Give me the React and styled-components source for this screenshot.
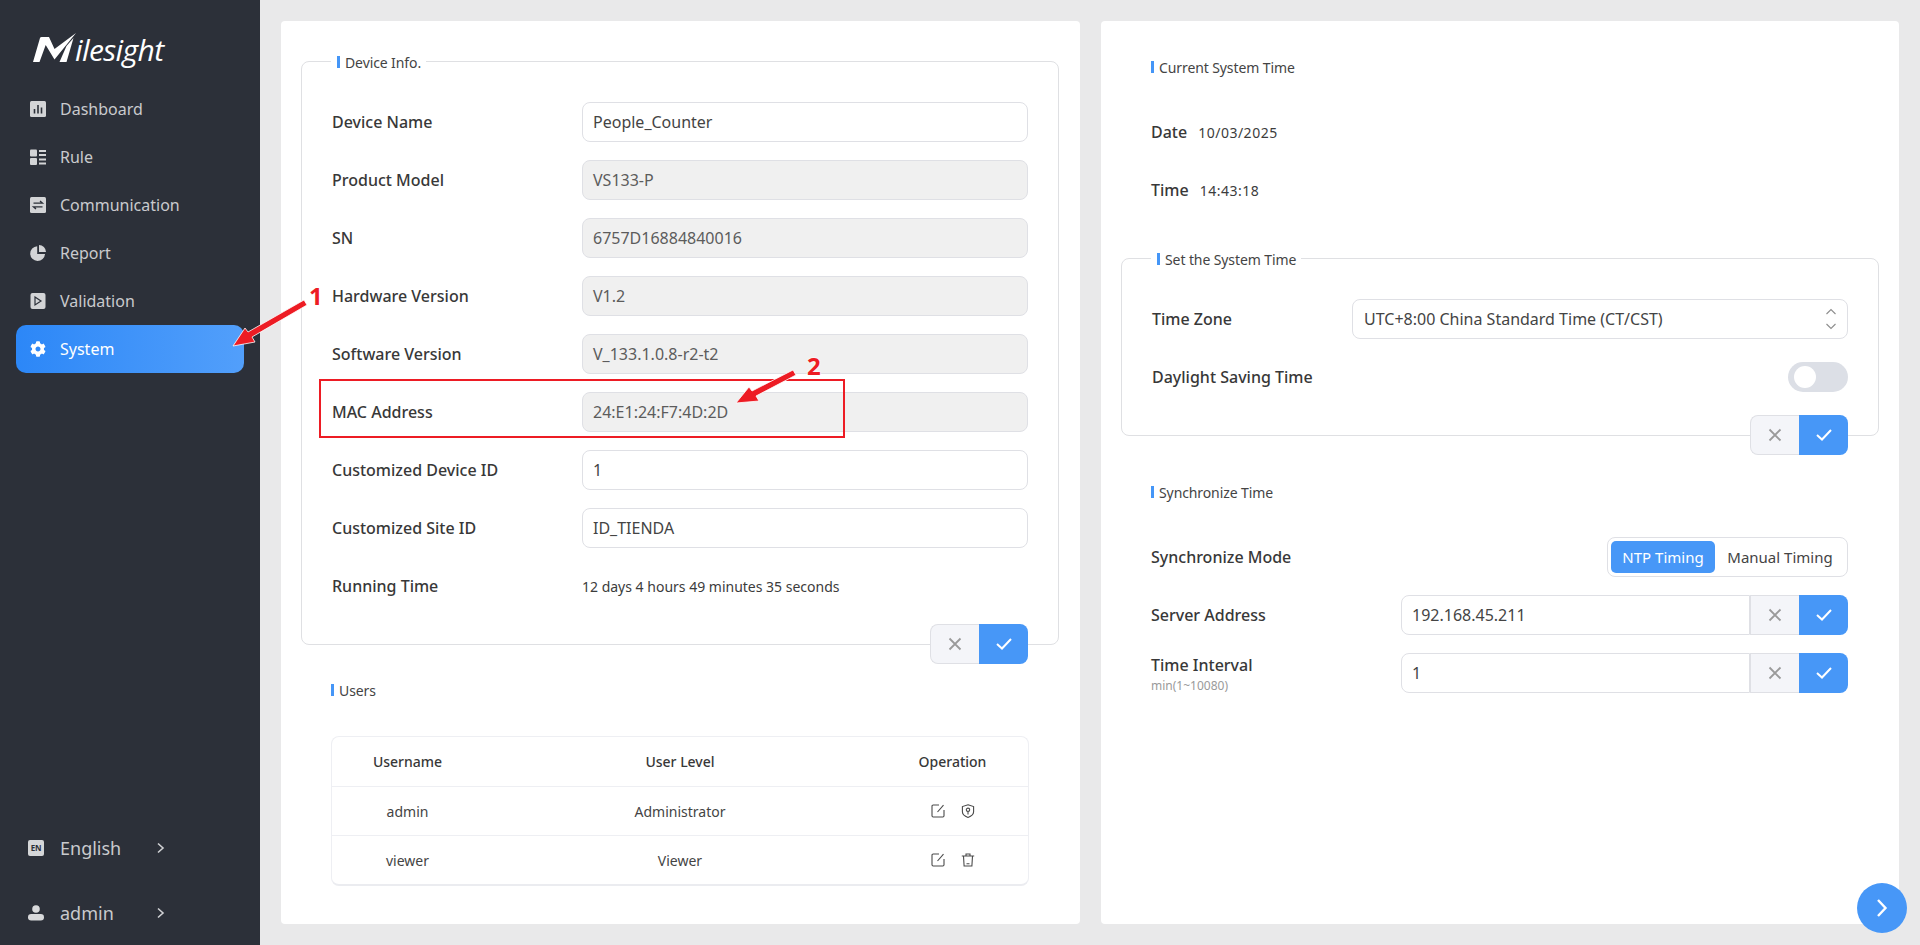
import React from "react";
import styled, { createGlobalStyle } from "styled-components";
import { FaCog } from "react-icons/fa";

const GlobalStyle = createGlobalStyle`
  html, body { margin: 0; padding: 0; background: #e9e9ea; }
  * { box-sizing: border-box; }
  body { font-family: "Noto Sans", "Liberation Sans", sans-serif; color: #333; }
`;

const Page = styled.div`
  position: relative;
  display: flex;
  width: 1920px;
  height: 945px;
  overflow: hidden;
  background: #e9e9ea;
`;

const Sidebar = styled.aside`
  display: flex;
  flex-direction: column;
  flex: 0 0 260px;
  background: #2c3039;
  color: #cfd0d3;
`;

const LogoBox = styled.div`
  display: flex;
  align-items: flex-end;
  height: 85px;
  padding: 32px 0 0 33px;
`;

const LogoText = styled.span`
  margin: 0 0 17px -4px;
  font-family: "Open Sans", sans-serif;
  font-size: 30px;
  line-height: 36px;
  font-style: italic;
  font-weight: 400;
  letter-spacing: -0.6px;
  color: #fff;
`;

const LogoMark = styled.svg`
  flex: none;
  margin-bottom: 21px;
`;

const Menu = styled.nav`
  display: flex;
  flex-direction: column;
  flex: 1;
  padding: 0 16px;
`;

const MenuItem = styled.div`
  display: flex;
  align-items: center;
  gap: 14px;
  height: 48px;
  padding-left: 14px;
  border-radius: 10px;
  font-size: 16px;
  color: ${({ $active }) => ($active ? "#fff" : "#c9cacd")};
  background: ${({ $active }) =>
    $active ? "linear-gradient(90deg, #2c87f7, #529ffb)" : "transparent"};
`;

const MenuIcon = styled.span`
  display: flex;
  align-items: center;
  justify-content: center;
  width: 16px;
  height: 16px;
`;

const Footer = styled.div`
  display: flex;
  flex-direction: column;
  padding-left: 28px;
`;

const FooterItem = styled.div`
  display: flex;
  align-items: center;
  height: 65px;
  font-size: 18px;
  color: #c9cacd;
`;

const FooterLabel = styled.span`
  width: 96px;
  margin-left: 16px;
`;

const LangBadge = styled.span`
  display: flex;
  align-items: center;
  justify-content: center;
  width: 16px;
  height: 16px;
  border-radius: 2px;
  background: #d5d6d8;
  color: #2c3039;
  font-size: 8px;
  font-weight: 700;
  letter-spacing: -0.2px;
`;

const Main = styled.main`
  display: flex;
  flex: 1;
  gap: 21px;
  padding: 21px;
`;

const LeftCard = styled.section`
  flex: 0 0 799px;
  padding: 40px 21px 0 20px;
  background: #fff;
  border-radius: 4px;
`;

const RightCard = styled.section`
  flex: 0 0 798px;
  padding: 36px 20px 0 20px;
  background: #fff;
  border-radius: 4px;
`;

const Fieldset = styled.div`
  position: relative;
  margin-top: ${({ $margin }) => $margin || 0}px;
  padding: 40px 30px 0 30px;
  border: 1px solid #dfe0e3;
  border-radius: 8px;
`;

const Legend = styled.div`
  position: absolute;
  top: -10px;
  left: 29px;
  padding: 0 5px 0 6px;
  background: #fff;
`;

const Heading = styled.div`
  display: flex;
  align-items: center;
  height: 20px;
  font-size: 14px;
  letter-spacing: -0.1px;
  color: #444;
  &::before {
    content: "";
    width: 3px;
    height: 12px;
    margin-right: 5px;
    background: #4596f7;
  }
`;

const Section = styled.div`
  margin: ${({ $top }) => $top}px ${({ $right }) => $right}px 0 30px;
`;

const Rows = styled.div`
  display: flex;
  flex-direction: column;
  gap: 18px;
  margin-top: ${({ $top }) => $top || 0}px;
`;

const Row = styled.div`
  display: flex;
  align-items: center;
  height: 40px;
`;

const Label = styled.div`
  flex: 0 0 ${({ $width }) => $width}px;
  font-size: 16px;
  font-weight: 500;
  color: #383838;
`;

const SubLabel = styled.div`
  margin-top: 3px;
  font-size: 12px;
  font-weight: 400;
  line-height: 14px;
  color: #9a9a9a;
`;

const Field = styled.div`
  display: flex;
  align-items: center;
  flex: 1;
  height: 40px;
  padding-left: 10px;
  border: 1px solid #dfe0e5;
  border-radius: ${({ $joined }) => ($joined ? "8px 0 0 8px" : "8px")};
  background: ${({ $disabled }) => ($disabled ? "#f0f0f0" : "#fff")};
  font-size: 16px;
  color: ${({ $disabled }) => ($disabled ? "#5c5c5c" : "#444")};
`;

const SelectField = styled(Field)`
  justify-content: space-between;
  padding: 0 10px 0 11px;
`;

const PlainValue = styled.div`
  font-size: 14px;
  color: #3c3c3c;
`;

const DateValue = styled(PlainValue)`
  margin-left: 11px;
  letter-spacing: 0.5px;
`;

const DateLabel = styled(Label)`
  flex: 0 0 auto;
`;

const ButtonRow = styled.div`
  display: flex;
  justify-content: flex-end;
  margin: 18px 0 -20px 0;
`;

const ButtonGroup = styled.div`
  display: flex;
  flex: 0 0 98px;
  height: 40px;
`;

const CancelButton = styled.div`
  display: flex;
  align-items: center;
  justify-content: center;
  width: 49px;
  background: #f4f5f9;
  border: 1px solid #dfe0e5;
  border-right: none;
  border-radius: ${({ $joined }) => ($joined ? "0" : "8px 0 0 8px")};
`;

const ConfirmButton = styled.div`
  display: flex;
  align-items: center;
  justify-content: center;
  width: 49px;
  background: #4797f7;
  border-radius: 0 8px 8px 0;
`;

const Toggle = styled.div`
  display: flex;
  align-items: center;
  width: 60px;
  height: 30px;
  margin-left: auto;
  padding-left: 6px;
  border-radius: 15px;
  background: #dcdfe6;
  &::before {
    content: "";
    width: 22px;
    height: 22px;
    border-radius: 50%;
    background: #fff;
  }
`;

const Segmented = styled.div`
  display: flex;
  align-items: center;
  width: 241px;
  height: 40px;
  margin-left: auto;
  padding: 0 3px;
  border: 1px solid #dfe0e5;
  border-radius: 8px;
`;

const Segment = styled.div`
  display: flex;
  align-items: center;
  justify-content: center;
  flex: 0 0 ${({ $width }) => $width}px;
  height: 32px;
  border-radius: 5px;
  font-size: 15px;
  color: ${({ $active }) => ($active ? "#fff" : "#444")};
  background: ${({ $active }) => ($active ? "#4797f7" : "transparent")};
`;

const UserTable = styled.div`
  margin-top: 36px;
  border: 1px solid #eeeff3;
  border-bottom: 2px solid #ebecf0;
  border-radius: 8px;
`;

const TableRow = styled.div`
  display: grid;
  grid-template-columns: 151px 394px 1fr;
  align-items: center;
  height: ${({ $height }) => $height}px;
  border-bottom: ${({ $last }) => ($last ? "none" : "1px solid #eeeff3")};
  text-align: center;
  font-size: 14px;
  font-weight: ${({ $head }) => ($head ? 500 : 400)};
  color: ${({ $head }) => ($head ? "#383838" : "#444")};
`;

const Operation = styled.div`
  display: flex;
  justify-content: center;
  gap: 16px;
  height: 14px;
`;

const FloatButton = styled.div`
  position: absolute;
  left: 1857px;
  top: 883px;
  display: flex;
  align-items: center;
  justify-content: center;
  width: 50px;
  height: 50px;
  border-radius: 50%;
  background: #4797f7;
`;

const AnnotationLayer = styled.svg`
  position: absolute;
  left: 0;
  top: 0;
  width: 1920px;
  height: 945px;
  pointer-events: none;
`;

const MacBox = styled.div`
  position: absolute;
  left: 319px;
  top: 379px;
  width: 526px;
  height: 59px;
  border: 2px solid #ed1c24;
  pointer-events: none;
`;

const Callout = styled.span`
  position: absolute;
  left: ${({ $x }) => $x}px;
  top: ${({ $y }) => $y}px;
  font-size: 24px;
  line-height: 24px;
  font-weight: 700;
  color: #ed1c24;
  text-shadow: 0 0 2px #fff, 0 0 2px #fff;
`;

const Logo = () => (
  <LogoMark width="46" height="32" viewBox="-1 0 46 32">
    <path
      fill="#fff"
      d="M-1 30 L6 6 Q6.4 5 7.6 5 L15 5 L20.5 17 L42 1 L20.5 27.5 L11.7 13 L5.5 30 Z"
    />
    <path fill="#fff" d="M25.5 30 L32.5 14 L39.5 6 L32.5 30 Z" />
  </LogoMark>
);

const DashboardIcon = () => (
  <svg width="16" height="16" viewBox="0 0 16 16">
    <rect width="16" height="16" rx="1.5" fill="#d3d4d6" />
    <path d="M4.5 8v4.5M8 4v8.5M11.5 6.5v6" stroke="#2c3039" strokeWidth="1.6" />
  </svg>
);

const RuleIcon = () => (
  <svg width="16" height="16" viewBox="0 0 16 16" fill="#d3d4d6">
    <rect x="0" y="0.5" width="7" height="7" rx="1" />
    <rect x="0" y="9" width="7" height="7" rx="1" />
    <rect x="9" y="1" width="7" height="2" />
    <rect x="9" y="5" width="7" height="2" />
    <rect x="9" y="9.5" width="7" height="2" />
    <rect x="9" y="13.5" width="7" height="2" />
  </svg>
);

const CommunicationIcon = () => (
  <svg width="16" height="16" viewBox="0 0 16 16">
    <rect width="16" height="16" rx="1.5" fill="#d3d4d6" />
    <path d="M3.5 6.2h9L10 4M12.5 9.8h-9L6 12" fill="none" stroke="#2c3039" strokeWidth="1.3" />
  </svg>
);

const ReportIcon = () => (
  <svg width="16" height="16" viewBox="0 0 16 16" fill="#d3d4d6">
    <path d="M7.2 1.2A7.4 7.4 0 1 0 15 9H7.2Z" />
    <path d="M9 0a7.2 7.2 0 0 1 7 7H9Z" />
  </svg>
);

const ValidationIcon = () => (
  <svg width="16" height="16" viewBox="0 0 16 16">
    <rect x="0.5" width="15" height="16" rx="2" fill="#d3d4d6" />
    <path d="M5 4l6 4-6 4Z" fill="none" stroke="#2c3039" strokeWidth="1.2" />
  </svg>
);

const UserIcon = () => (
  <svg width="16" height="16" viewBox="0 0 16 16" fill="#d8d9db">
    <circle cx="8" cy="4" r="3.8" />
    <rect y="9" width="16" height="6.5" rx="3.2" />
  </svg>
);

const Chevron = () => (
  <svg width="10" height="12" viewBox="0 0 10 12" fill="none" stroke="#cfd0d3" strokeWidth="1.6">
    <path d="M2 1.5L7 6l-5 4.5" />
  </svg>
);

const CrossIcon = () => (
  <svg width="14" height="14" viewBox="0 0 14 14" fill="none" stroke="#9a9a9a" strokeWidth="1.8">
    <path d="M1.5 1.5l11 11M12.5 1.5l-11 11" />
  </svg>
);

const CheckIcon = () => (
  <svg width="16" height="14" viewBox="0 0 16 14" fill="none" stroke="#fff" strokeWidth="2">
    <path d="M1 7l5 4.5L15 2" />
  </svg>
);

const UpDownIcon = () => (
  <svg width="12" height="22" viewBox="0 0 12 22" fill="none" stroke="#8d8d8d" strokeWidth="1.1">
    <path d="M1.5 6L6 1.5 10.5 6M1.5 16L6 20.5 10.5 16" />
  </svg>
);

const EditIcon = () => (
  <svg width="14" height="14" viewBox="0 0 14 14" fill="none" stroke="#4a4a4a" strokeWidth="1.1">
    <path d="M8 1H2.2Q1 1 1 2.2v9.6Q1 13 2.2 13h9.6q1.2 0 1.2-1.2V6" />
    <path d="M6.5 8L12.5 1.2" />
  </svg>
);

const ShieldIcon = () => (
  <svg width="14" height="14" viewBox="0 0 14 14" fill="none" stroke="#4a4a4a" strokeWidth="1.1">
    <path d="M7 .8L12.6 2.6v5.2c0 2.8-2.6 4.6-5.6 5.6-3-1-5.6-2.8-5.6-5.6V2.6Z" />
    <circle cx="7" cy="5.8" r="1.7" />
    <path d="M7 7.5v3" />
  </svg>
);

const TrashIcon = () => (
  <svg width="14" height="14" viewBox="0 0 14 14" fill="none" stroke="#4a4a4a" strokeWidth="1.1">
    <path d="M.8 3h12.4M5 3V1h4v2M2.5 3l.6 10h7.8l.6-10M5.5 10.8h3" />
  </svg>
);

const ActionButtons = ({ joined }) => (
  <ButtonGroup>
    <CancelButton $joined={joined}>
      <CrossIcon />
    </CancelButton>
    <ConfirmButton>
      <CheckIcon />
    </ConfirmButton>
  </ButtonGroup>
);

const menu = [
  { label: "Dashboard", icon: <DashboardIcon /> },
  { label: "Rule", icon: <RuleIcon /> },
  { label: "Communication", icon: <CommunicationIcon /> },
  { label: "Report", icon: <ReportIcon /> },
  { label: "Validation", icon: <ValidationIcon /> },
  { label: "System", icon: <FaCog size={16} color="#fff" />, active: true },
];

const deviceRows = [
  { label: "Device Name", value: "People_Counter" },
  { label: "Product Model", value: "VS133-P", disabled: true },
  { label: "SN", value: "6757D16884840016", disabled: true },
  { label: "Hardware Version", value: "V1.2", disabled: true },
  { label: "Software Version", value: "V_133.1.0.8-r2-t2", disabled: true },
  { label: "MAC Address", value: "24:E1:24:F7:4D:2D", disabled: true },
  { label: "Customized Device ID", value: "1" },
  { label: "Customized Site ID", value: "ID_TIENDA" },
];

const App = () => {
  return (
    <Page>
      <GlobalStyle />
      <Sidebar>
        <LogoBox>
          <Logo />
          <LogoText>ilesight</LogoText>
        </LogoBox>
        <Menu>
          {menu.map((item) => (
            <MenuItem key={item.label} $active={item.active}>
              <MenuIcon>{item.icon}</MenuIcon>
              {item.label}
            </MenuItem>
          ))}
        </Menu>
        <Footer>
          <FooterItem>
            <LangBadge>EN</LangBadge>
            <FooterLabel>English</FooterLabel>
            <Chevron />
          </FooterItem>
          <FooterItem>
            <UserIcon />
            <FooterLabel>admin</FooterLabel>
            <Chevron />
          </FooterItem>
        </Footer>
      </Sidebar>

      <Main>
        <LeftCard>
          <Fieldset>
            <Legend>
              <Heading>Device Info.</Heading>
            </Legend>
            <Rows>
              {deviceRows.map((row) => (
                <Row key={row.label}>
                  <Label $width={250}>{row.label}</Label>
                  <Field $disabled={row.disabled}>{row.value}</Field>
                </Row>
              ))}
              <Row>
                <Label $width={250}>Running Time</Label>
                <PlainValue>12 days 4 hours 49 minutes 35 seconds</PlainValue>
              </Row>
            </Rows>
            <ButtonRow>
              <ActionButtons />
            </ButtonRow>
          </Fieldset>

          <Section $top={35} $right={30}>
            <Heading>Users</Heading>
            <UserTable>
              <TableRow $head $height={50}>
                <div>Username</div>
                <div>User Level</div>
                <div>Operation</div>
              </TableRow>
              <TableRow $height={49}>
                <div>admin</div>
                <div>Administrator</div>
                <Operation>
                  <EditIcon />
                  <ShieldIcon />
                </Operation>
              </TableRow>
              <TableRow $height={48} $last>
                <div>viewer</div>
                <div>Viewer</div>
                <Operation>
                  <EditIcon />
                  <TrashIcon />
                </Operation>
              </TableRow>
            </UserTable>
          </Section>
        </LeftCard>

        <RightCard>
          <Section $top={0} $right={31}>
            <Heading>Current System Time</Heading>
            <Rows $top={35}>
              <Row>
                <DateLabel>Date</DateLabel>
                <DateValue>10/03/2025</DateValue>
              </Row>
              <Row>
                <DateLabel>Time</DateLabel>
                <DateValue>14:43:18</DateValue>
              </Row>
            </Rows>
          </Section>

          <Fieldset $margin={48}>
            <Legend>
              <Heading>Set the System Time</Heading>
            </Legend>
            <Rows>
              <Row>
                <Label $width={200}>Time Zone</Label>
                <SelectField>
                  UTC+8:00 China Standard Time (CT/CST)
                  <UpDownIcon />
                </SelectField>
              </Row>
              <Row>
                <Label $width={200}>Daylight Saving Time</Label>
                <Toggle />
              </Row>
            </Rows>
            <ButtonRow>
              <ActionButtons />
            </ButtonRow>
          </Fieldset>

          <Section $top={46} $right={31}>
            <Heading>Synchronize Time</Heading>
            <Rows $top={35}>
              <Row>
                <Label $width={250}>Synchronize Mode</Label>
                <Segmented>
                  <Segment $active $width={104}>
                    NTP Timing
                  </Segment>
                  <Segment $width={130}>Manual Timing</Segment>
                </Segmented>
              </Row>
              <Row>
                <Label $width={250}>Server Address</Label>
                <Field $joined>192.168.45.211</Field>
                <ActionButtons joined />
              </Row>
              <Row>
                <Label $width={250}>
                  Time Interval
                  <SubLabel>min(1~10080)</SubLabel>
                </Label>
                <Field $joined>1</Field>
                <ActionButtons joined />
              </Row>
            </Rows>
          </Section>
        </RightCard>
      </Main>

      <FloatButton>
        <svg width="12" height="20" viewBox="0 0 12 20" fill="none" stroke="#fff" strokeWidth="2.4">
          <path d="M2 2l7.5 8L2 18" />
        </svg>
      </FloatButton>

      <MacBox />
      <AnnotationLayer viewBox="0 0 1920 945">
        <g stroke="#fff" strokeWidth="0.8" fill="#ed1c24">
          <path d="M233 346L245 328 248 332 304 300 307 305 252 337 255 342Z" />
          <path d="M736 403L749 387 752 391 793 370 796 375 756 396 759 401Z" />
        </g>
      </AnnotationLayer>
      <Callout $x={309} $y={284}>1</Callout>
      <Callout $x={807} $y={354}>2</Callout>
    </Page>
  );
};

export default App;
